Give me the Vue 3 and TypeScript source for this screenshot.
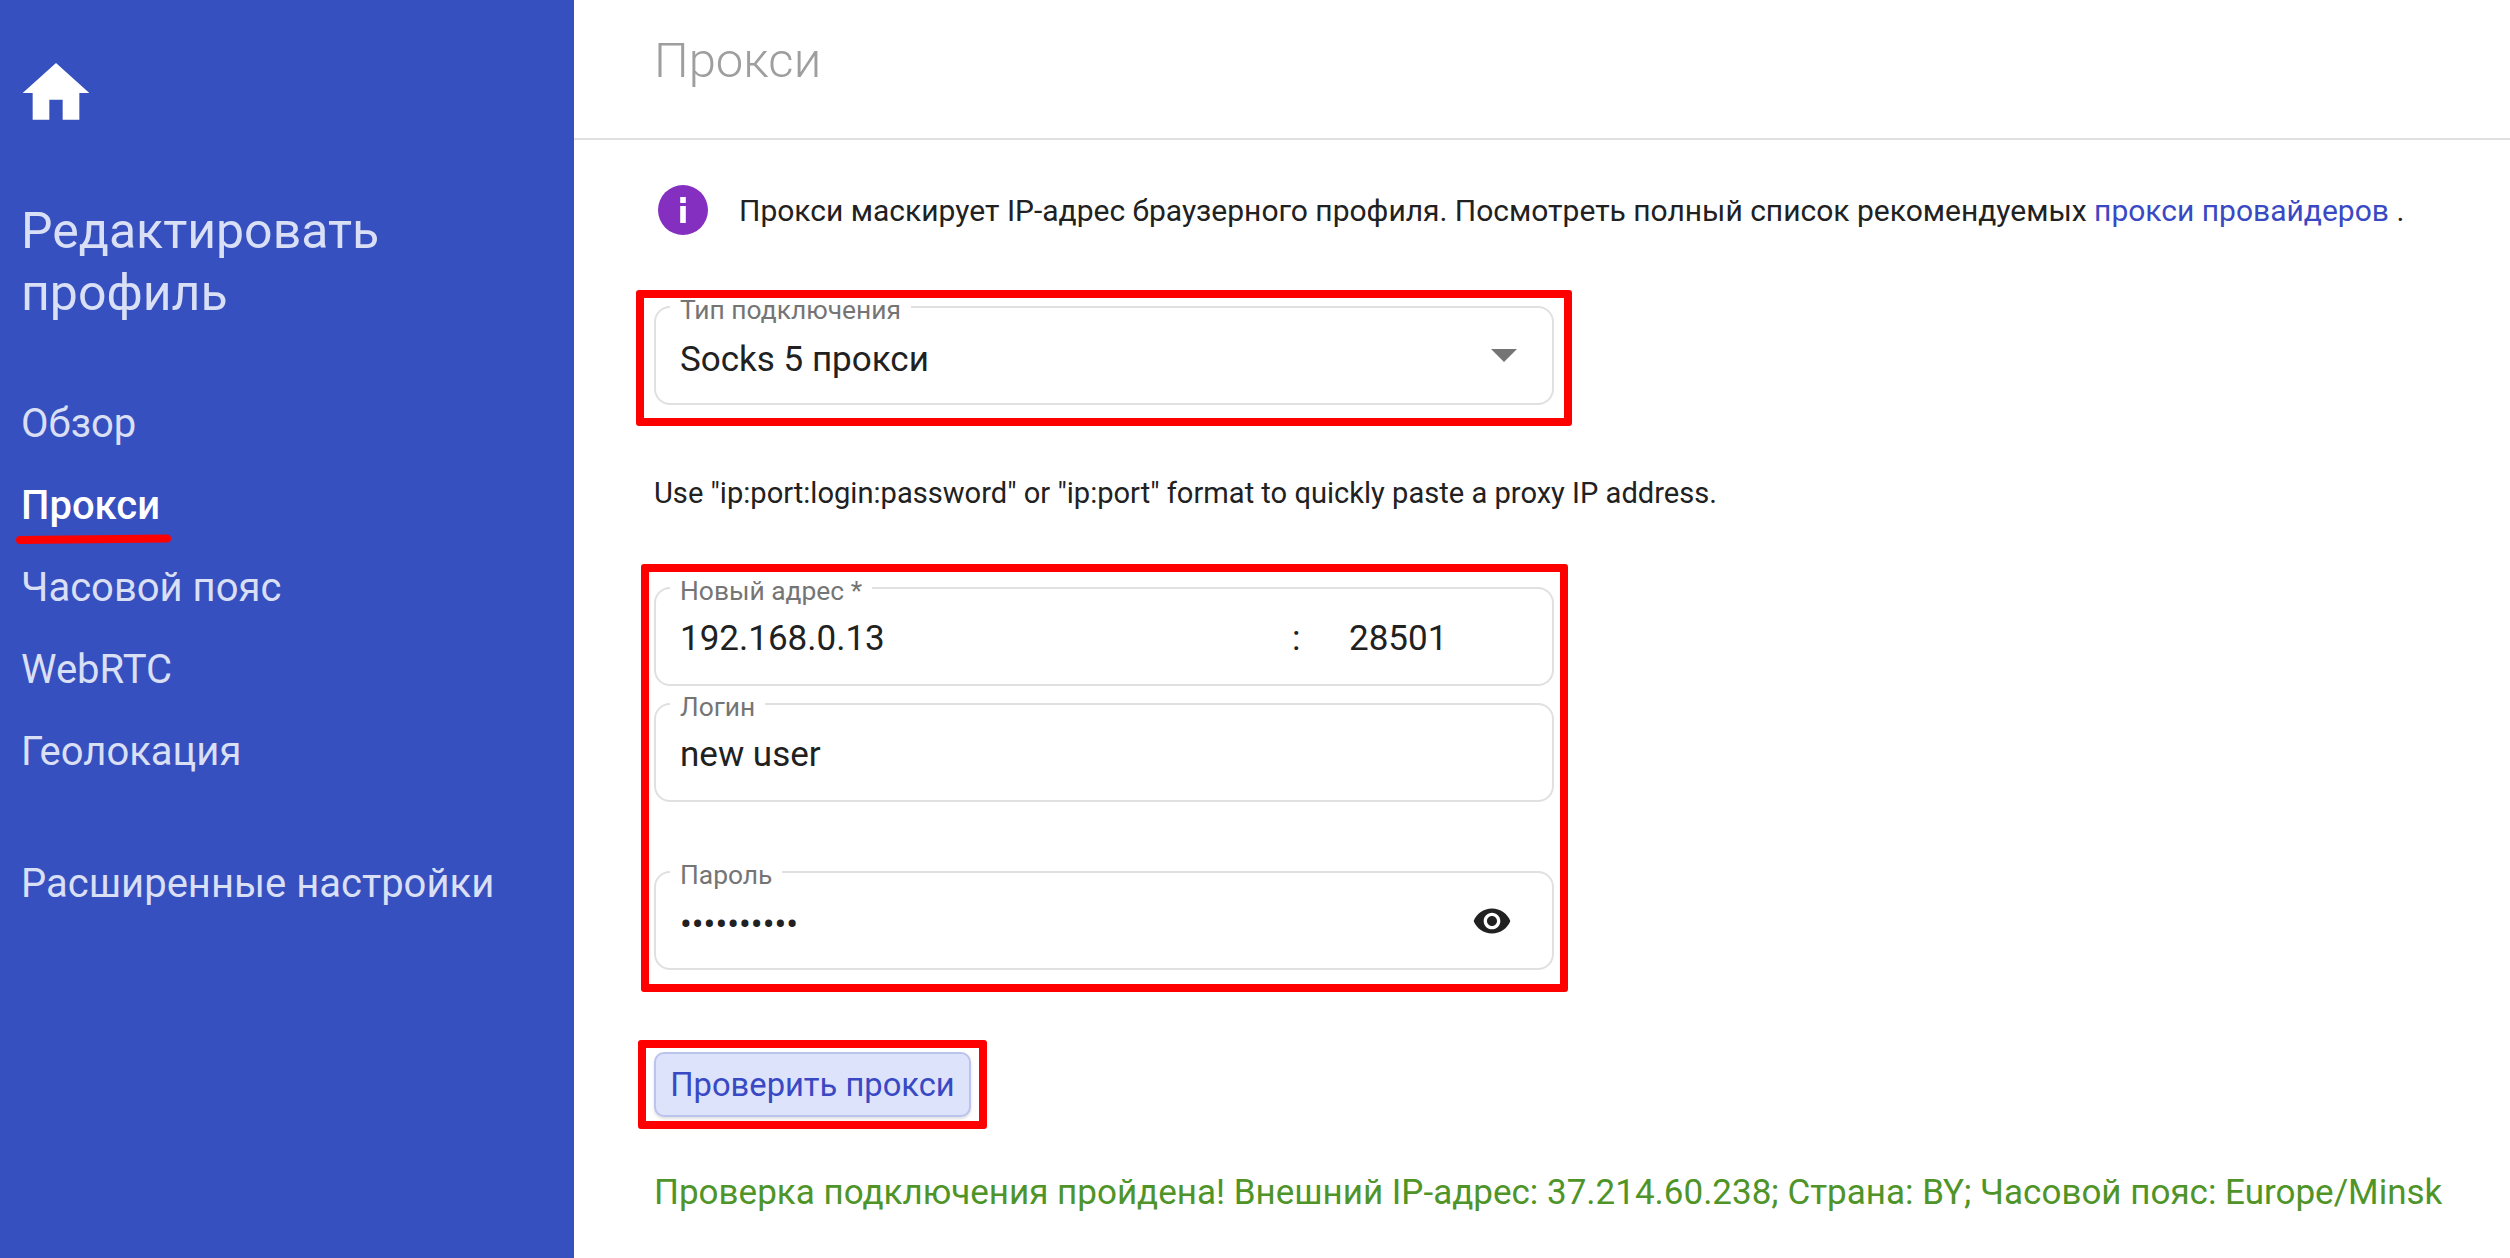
<script setup lang="ts">
const navItems = ['Обзор', 'Прокси', 'Часовой пояс', 'WebRTC', 'Геолокация']
const activeItem = 'Прокси'
</script>

<template>
  <div class="page">
    <aside class="sidebar">
      <svg class="home" viewBox="0 0 24 24" width="80" height="80">
        <path fill="#fff" d="M10 20v-6h4v6h5v-8h3L12 3 2 12h3v8z" />
      </svg>
      <h1 class="side-title">Редактировать профиль</h1>
      <nav class="nav">
        <a
          v-for="item in navItems"
          :key="item"
          class="nav-item"
          :class="{ active: item === activeItem }"
        >
          {{ item }}
          <svg v-if="item === activeItem" class="underline" viewBox="0 0 158 10" width="158" height="10">
            <path d="M5 6 L152 4.5" stroke="#f00" stroke-width="8" stroke-linecap="round" fill="none" />
          </svg>
        </a>
      </nav>
      <a class="nav-item advanced">Расширенные настройки</a>
    </aside>

    <main class="main">
      <header class="topbar">Прокси</header>
      <div class="content">
        <div class="info">
          <svg class="info-icon" viewBox="0 0 50 50" width="50" height="50">
            <circle cx="25" cy="25" r="25" fill="#852fc0" />
            <rect x="22.2" y="21" width="5.6" height="17" fill="#fff" />
            <rect x="22.2" y="12" width="5.6" height="6" fill="#fff" />
          </svg>
          <p>
            Прокси маскирует IP-адрес браузерного профиля. Посмотреть полный список рекомендуемых
            <a class="link">прокси провайдеров</a> .
          </p>
        </div>

        <div class="mark mark-type">
          <div class="field">
            <label class="field-label">Тип подключения</label>
            <span class="value">Socks 5 прокси</span>
            <span class="arrow"></span>
          </div>
        </div>

        <p class="hint">Use "ip:port:login:password" or "ip:port" format to quickly paste a proxy IP address.</p>

        <div class="mark mark-auth">
          <div class="field">
            <label class="field-label">Новый адрес *</label>
            <span class="value host">192.168.0.13</span>
            <span class="value colon">:</span>
            <span class="value">28501</span>
          </div>
          <div class="field login">
            <label class="field-label">Логин</label>
            <span class="value">new user</span>
          </div>
          <div class="field password">
            <label class="field-label">Пароль</label>
            <span class="value">••••••••••</span>
            <svg class="eye" viewBox="0 0 24 24" width="40" height="40">
              <path
                fill="#212121"
                d="M12 4.5C7 4.5 2.73 7.61 1 12c1.73 4.39 6 7.5 11 7.5s9.27-3.11 11-7.5c-1.73-4.39-6-7.5-11-7.5zM12 17c-2.76 0-5-2.24-5-5s2.24-5 5-5 5 2.24 5 5-2.24 5-5 5zm0-8c-1.66 0-3 1.34-3 3s1.34 3 3 3 3-1.34 3-3-1.34-3-3-3z"
              />
            </svg>
          </div>
        </div>

        <div class="mark mark-check">
          <button class="check-btn" type="button">Проверить прокси</button>
        </div>

        <p class="result">Проверка подключения пройдена! Внешний IP-адрес: 37.214.60.238; Страна: BY; Часовой пояс: Europe/Minsk</p>
      </div>
    </main>
  </div>
</template>

<style scoped>
.page {
  display: flex;
  width: 2510px;
  height: 1258px;
  overflow: hidden;
  background: #fff;
  font-family: Roboto, "Noto Sans", sans-serif;
  color: #212121;
}

.sidebar {
  flex: 0 0 574px;
  box-sizing: border-box;
  padding: 53px 20px 0 21px;
  background: #3750bf;
  color: #d9dff5;
}

.home {
  display: block;
  margin-left: -5px;
}

.side-title {
  margin: 67px 0 0;
  width: 420px;
  font-size: 50px;
  font-weight: 400;
  line-height: 62px;
}

.nav {
  margin-top: 59px;
  display: flex;
  flex-direction: column;
}

.nav-item {
  position: relative;
  display: block;
  font-size: 40px;
  line-height: 82px;
}

.nav-item.active {
  color: #fff;
  font-weight: 500;
}

.underline {
  position: absolute;
  left: -6px;
  top: 69px;
}

.advanced {
  margin-top: 50px;
}

.main {
  flex: 1;
  min-width: 0;
}

.topbar {
  box-sizing: border-box;
  height: 140px;
  padding: 38px 0 0 80px;
  border-bottom: 2px solid #e0e0e0;
  font-size: 49px;
  font-weight: 300;
  line-height: 46px;
  color: #9e9e9e;
}

.content {
  padding: 45px 0 0 80px;
}

.info {
  display: flex;
  align-items: center;
  gap: 31px;
  margin-left: 4px;
  font-size: 30px;
}

.info p {
  margin: 0;
}

.link {
  color: #3949c4;
}

.mark {
  box-sizing: border-box;
  border: 8px solid #f00;
  border-radius: 3px;
}

.mark-type {
  width: 936px;
  margin: 55px 0 0 -18px;
  padding: 8px 10px 13px;
}

.hint {
  margin: 50px 0 0;
  font-size: 29.1px;
  line-height: 34px;
}

.mark-auth {
  width: 927px;
  margin: 54px 0 0 -13px;
  padding: 15px 6px 14px 5px;
}

.field {
  position: relative;
  box-sizing: border-box;
  display: flex;
  align-items: center;
  width: 900px;
  height: 99px;
  padding: 8px 24px 0 24px;
  border: 2px solid #e0e0e0;
  border-radius: 16px;
}

.mark-auth .field {
  padding-top: 4px;
}

.field-label {
  position: absolute;
  top: -10px;
  left: 14px;
  padding: 0 10px;
  background: #fff;
  font-size: 26.4px;
  line-height: 24px;
  color: #757575;
}

.value {
  font-size: 35px;
  line-height: 42px;
  color: #212121;
}

.host {
  width: 612px;
}

.colon {
  width: 57px;
}

.arrow {
  margin-left: auto;
  margin-right: 11px;
  margin-top: -8px;
  border-left: 13px solid transparent;
  border-right: 13px solid transparent;
  border-top: 13px solid #757575;
}

.login {
  margin-top: 17px;
}

.password {
  margin-top: 69px;
}

.password .value {
  padding-top: 4px;
}

.eye {
  margin-left: auto;
  margin-right: 16px;
  margin-top: -4px;
}

.mark-check {
  display: inline-block;
  margin: 48px 0 0 -16px;
  padding: 4px 8px;
}

.check-btn {
  display: block;
  width: 317px;
  height: 65px;
  padding: 0;
  border: 2px solid #bac4ec;
  border-radius: 10px;
  background: #dde3fb;
  box-shadow: 0 2px 3px rgba(0, 0, 0, 0.12);
  color: #3949c4;
  font-family: inherit;
  font-size: 32.7px;
}

.result {
  margin: 44px 0 0;
  font-size: 35px;
  line-height: 40px;
  color: #4f9428;
}
</style>
